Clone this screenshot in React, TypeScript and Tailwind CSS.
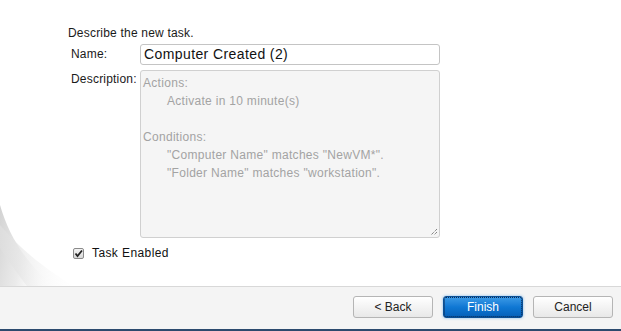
import React from "react";

export default function App() {
  const font = { fontFamily: '"Liberation Sans", Arial, sans-serif' };
  return (
    <div className="relative w-[621px] h-[331px] bg-white overflow-hidden text-[12px] text-[#1a1a1a]" style={font}>
      <svg className="absolute left-0 top-0 pointer-events-none" width="621" height="331" viewBox="0 0 621 331">
        <defs>
          <linearGradient id="sw" x1="0" y1="0" x2="1" y2="0.3">
            <stop offset="0" stopColor="#d2d2d2" stopOpacity="1" />
            <stop offset="0.5" stopColor="#e2e2e2" stopOpacity="0.7" />
            <stop offset="1" stopColor="#ffffff" stopOpacity="0" />
          </linearGradient>
          <linearGradient id="sw2" x1="0" y1="0" x2="1" y2="0">
            <stop offset="0" stopColor="#dedede" stopOpacity="0.9" />
            <stop offset="1" stopColor="#ffffff" stopOpacity="0" />
          </linearGradient>
        </defs>
        <path d="M0 205 C 10 240, 30 268, 58 290 L 0 290 Z" fill="url(#sw)" />
        <path d="M0 225 C 25 255, 55 275, 80 290 L 30 290 C 18 275, 8 260, 0 248 Z" fill="url(#sw2)" />
      </svg>

      <div className="relative flex flex-col h-full">
        <div className="flex-1 pl-[68px] pt-[26px]">
          <div className="leading-[14px] tracking-[0.2px]">Describe the new task.</div>
          <div className="flex items-start mt-[4px]">
            <div className="w-[72px] pl-[3px] pt-[3px] leading-[14px] tracking-[0.2px]">Name:</div>
            <div className="w-[300px] h-[21px] border border-[#c4c4c4] rounded-[3px] bg-white px-[3px] leading-[19px] text-[14px] tracking-[0.4px] text-[#111]">
              Computer Created (2)
            </div>
          </div>
          <div className="flex items-start mt-[5px]">
            <div className="w-[72px] pl-[3px] pt-[2px] leading-[14px] tracking-[0.2px]">Description:</div>
            <div className="relative w-[300px] h-[168px] border border-[#d0d0d0] rounded-[3px] bg-[#f5f5f5] px-[2px] pt-[3px] text-[#a3a3a3] leading-[18px] tracking-[0.3px]">
              <div>Actions:</div>
              <div className="pl-[24px]">Activate in 10 minute(s)</div>
              <div>&nbsp;</div>
              <div>Conditions:</div>
              <div className="pl-[24px]">"Computer Name" matches "NewVM*".</div>
              <div className="pl-[24px]">"Folder Name" matches "workstation".</div>
              <svg className="absolute right-[1px] bottom-[1px]" width="9" height="9" viewBox="0 0 9 9">
                <path d="M8 2 L2 8 M8 5 L5 8" stroke="#555" strokeWidth="1" strokeDasharray="1 1" />
              </svg>
            </div>
          </div>
          <div className="flex items-center mt-[8px] pl-[5px]">
            <div className="w-[11px] h-[11px] border border-[#8a8a8a] rounded-[2px] bg-gradient-to-b from-[#f4f4f4] to-[#d8d8d8] flex items-center justify-center">
              <svg width="9" height="9" viewBox="0 0 9 9">
                <path d="M1.5 4.5 L3.5 7 L8 1.5" stroke="#222" strokeWidth="1.8" fill="none" />
              </svg>
            </div>
            <span className="ml-[8px] leading-[14px] text-[#111] tracking-[0.4px]">Task Enabled</span>
          </div>
        </div>

        <div className="h-[45px] border-t border-[#d8d8d8] bg-[#f4f4f4] border-b-2 border-b-[#2c4a6e] flex items-center justify-end gap-[10px] pr-[8px] pb-[2px]">
          <button className="w-[80px] h-[22px] border border-[#b5b5b5] rounded-[3px] bg-gradient-to-b from-white to-[#e8e8e8] text-[12px] text-[#222]">
            &lt; Back
          </button>
          <button className="w-[80px] h-[22px] rounded-[3px] border border-[#0b4f94] outline-1 outline-dotted outline-[#0a2a55] outline-offset-[-2px] bg-gradient-to-b from-[#3a9ae6] via-[#0f78d4] to-[#0760b8] text-[12px] text-white shadow-[0_0_3px_#7fb8ea]">
            Finish
          </button>
          <button className="w-[80px] h-[22px] border border-[#b5b5b5] rounded-[3px] bg-gradient-to-b from-white to-[#e8e8e8] text-[12px] text-[#222]">
            Cancel
          </button>
        </div>
      </div>
    </div>
  );
}
